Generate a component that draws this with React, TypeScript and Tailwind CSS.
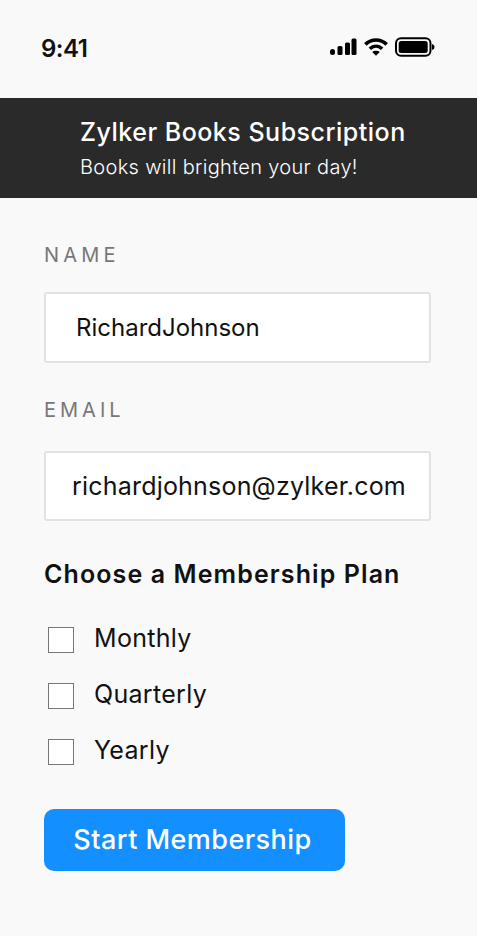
import { useState } from 'react'

const plans = ['Monthly', 'Quarterly', 'Yearly']

function StatusIcons() {
  return (
    <div className="mt-[-4px] flex items-center gap-[7px]">
      <svg width="27" height="18" viewBox="0 0 27 18" fill="#000">
        <rect x="0" y="11" width="5" height="6" rx="2.500" />
        <rect x="7.500" y="8" width="5" height="9" rx="1.500" />
        <rect x="15" y="4.500" width="5" height="12.500" rx="1.500" />
        <rect x="21.500" y="0.500" width="5" height="16.500" rx="1.500" />
      </svg>
      <svg width="24" height="18" viewBox="0 0 24 18" fill="none" stroke="#000" strokeWidth="3.600">
        <path d="M1.300 6.300C7.500 .6 16.500 .6 22.700 6.300" />
        <path d="M5.800 10.800C9.500 7.300 14.500 7.300 18.200 10.800" />
        <path d="M12 17.800l-3.800-3.900c2.200-1.700 5.400-1.700 7.600 0z" fill="#000" stroke="none" />
      </svg>
      <svg width="40" height="20" viewBox="0 0 40 20" fill="none">
        <rect x="1" y="1.200" width="34.500" height="17.600" rx="5" stroke="#000" strokeWidth="2" />
        <rect x="3.700" y="3.900" width="29" height="12.200" rx="2.500" fill="#000" />
        <path d="M37 7c1.500.5 2.500 1.500 2.500 3s-1 2.500-2.500 3z" fill="#000" />
      </svg>
    </div>
  )
}

export default function App() {
  const [name, setName] = useState('RichardJohnson')
  const [email, setEmail] = useState('richardjohnson@zylker.com')
  const [selected, setSelected] = useState<string[]>([])

  const togglePlan = (plan: string) => {
    setSelected(prev => (prev.includes(plan) ? prev.filter(p => p !== plan) : [...prev, plan]))
  }

  return (
    <div className="h-[936px] w-[477px] overflow-hidden bg-[#f9f9f9] font-['Inter',sans-serif] text-[#111]">
      {/* Status bar */}
      <div className="flex h-[98px] items-center justify-between pl-[41px] pr-[42px]">
        <span className="text-[24px] font-semibold tracking-[-0.5px]">9:41</span>
        <StatusIcons />
      </div>

      {/* Header */}
      <header className="flex h-[100px] flex-col justify-center bg-[#2b2a2b] pl-[80px] text-white">
        <h1 className="text-[25px] leading-[34px] font-medium tracking-[0.5px]">Zylker Books Subscription</h1>
        <p className="mt-[3px] text-[20px] leading-[30px] font-light tracking-[0.32px]">Books will brighten your day!</p>
      </header>

      <form className="flex flex-col px-[44px] pt-[44px]">
        <label className="text-[20px] leading-[26px] tracking-[4.2px] text-[#777]">NAME</label>
        <input
          value={name}
          onChange={e => setName(e.target.value)}
          className="mt-[24px] h-[71px] w-[387px] rounded-[3px] border-2 border-[#e2e2e2] bg-white pl-[30px] text-[24px] outline-none"
        />

        <label className="mt-[34px] text-[20px] leading-[26px] tracking-[4px] text-[#777]">EMAIL</label>
        <input
          value={email}
          onChange={e => setEmail(e.target.value)}
          className="mt-[28px] h-[70px] w-[387px] rounded-[3px] border-2 border-[#e2e2e2] bg-white pl-[26px] text-[25px] tracking-[0.2px] outline-none"
        />

        <h2 className="mt-[36px] text-[25px] leading-[34px] font-semibold tracking-[1.1px]">Choose a Membership Plan</h2>

        <div className="mt-[36px] flex flex-col gap-[30px]">
          {plans.map(plan => (
            <label key={plan} className="flex h-[26px] items-center">
              <input
                type="checkbox"
                checked={selected.includes(plan)}
                onChange={() => togglePlan(plan)}
                className="ml-[4px] h-[26px] w-[26px] appearance-none border border-[#777] bg-white"
              />
              <span className="mb-[2px] ml-[20px] text-[25px] tracking-[0.3px]">{plan}</span>
            </label>
          ))}
        </div>

        <button
          type="button"
          className="mt-[44px] h-[62px] w-[301px] rounded-[10px] bg-[#148fff] pr-[4px] text-[27px] font-medium tracking-[0.45px] text-white"
        >
          Start Membership
        </button>
      </form>
    </div>
  )
}
